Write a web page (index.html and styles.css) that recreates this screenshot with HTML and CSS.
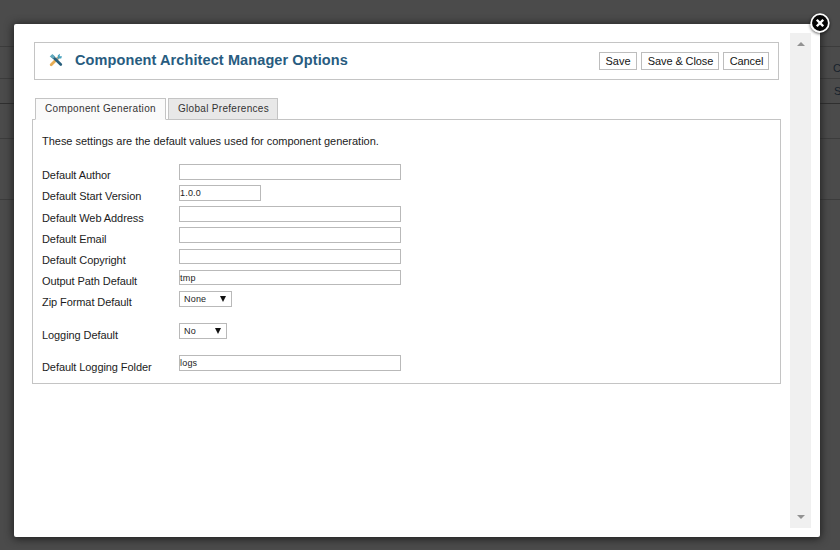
FILE: index.html
```html
<!DOCTYPE html>
<html lang="en">
<head>
<meta charset="utf-8">
<title>Component Architect Manager Options</title>
<link rel="stylesheet" href="styles.css">
</head>
<body>
<div class="backdrop">
  <div class="band band-top"></div>
  <div class="band band-menu"><span>C</span></div>
  <div class="band band-sub"><span>S</span></div>
  <div class="band band-title"></div>
  <div class="band band-body"></div>
</div>
<section class="modal">
  <button class="close" aria-label="Close">
    <svg viewBox="0 0 20 20" width="20" height="20"><circle cx="10" cy="10" r="8.8" fill="#050505" stroke="#fff" stroke-width="1.7"/><path d="M7.6 7.6l4.8 4.8M12.4 7.6l-4.8 4.8" stroke="#fff" stroke-width="2.3" stroke-linecap="square"/></svg>
  </button>
  <main class="content">
    <header class="toolbar">
      <svg class="tools" viewBox="0 0 14 14" width="14" height="14">
        <path d="M9 5L2.2 11.8" stroke="#e7ad55" stroke-width="2.8" stroke-linecap="round"/>
        <path d="M6.5 7.5L9.5 4.5" stroke="#8ba3a5" stroke-width="2"/>
        <path d="M9 5.5L8.8 2.2 11 .8 10.6 3.2 13 3.3 12.2 5.5z" fill="#47a1bd"/>
        <path d="M3.5 3.5L11.8 11.5" stroke="#285f7c" stroke-width="2.7" stroke-linecap="round"/>
        <path d="M.7 3.6L3.4.9 6.3 3.8 4 5.8z" fill="#63a9bd"/>
      </svg>
      <h1>Component Architect Manager Options</h1>
      <div class="actions"><button class="save">Save</button><button class="save-close">Save &amp; Close</button><button class="cancel">Cancel</button></div>
    </header>
    <nav class="tabs"><a class="tab active">Component Generation</a><a class="tab">Global Preferences</a></nav>
    <div class="panel">
      <p class="intro">These settings are the default values used for component generation.</p>
      <form class="fields">
        <label>Default Author</label><div class="input"></div>
        <label>Default Start Version</label><div class="input short">1.0.0</div>
        <label class="low">Default Web Address</label><div class="input"></div>
        <label class="low">Default Email</label><div class="input"></div>
        <label>Default Copyright</label><div class="input slim"></div>
        <label>Output Path Default</label><div class="input slim">tmp</div>
        <label>Zip Format Default</label><div class="select">None<i class="arrow"></i></div>
        <label class="low">Logging Default</label><div class="select narrow">No<i class="arrow"></i></div>
        <label class="low">Default Logging Folder</label><div class="input">logs</div>
      </form>
    </div>
  </main>
  <aside class="scrollbar"><i class="up"></i><i class="down"></i></aside>
</section>
</body>
</html>
```
FILE: styles.css
```css
* { box-sizing: border-box; }
body { margin: 0; height: 550px; overflow: hidden; position: relative; background: #4b4b4b; font-family: "Liberation Sans", Arial, sans-serif; font-size: 11px; color: #1c1c1c; }
button { font: inherit; margin: 0; padding: 0; }
.backdrop { height: 550px; display: flex; flex-direction: column; }
.band { border-bottom: 1px solid #3c3c3c; text-align: right; color: #17222c; overflow: hidden; }
.band span { display: block; width: 7px; margin-left: auto; text-align: left; }
.band-top { height: 47px; }
.band-menu { height: 32px; padding-top: 15px; }
.band-sub { height: 25px; padding-top: 6px; border-color: #2f2f2f; }
.band-sub span { width: 6px; }
.band-title { height: 35px; }
.band-body { height: 61px; }
.modal { position: absolute; left: 14px; top: 24px; width: 806px; height: 513px; background: #fff; border-radius: 2px; box-shadow: 0 1px 8px 1px #202020; display: flex; justify-content: space-between; padding: 9px 9px 9px 18px; }
.close { position: absolute; right: -10px; top: -11px; width: 20px; height: 20px; border: 0; border-radius: 50%; background: none; box-shadow: 0 1px 3px #0009; }
.close svg { display: block; }
.content { width: 749px; padding-top: 9px; }
.toolbar { width: 745px; height: 38px; margin-left: 2px; border: 1px solid #c4c4c4; display: flex; align-items: center; padding: 0 9px 0 14px; }
.tools { margin-top: -3px; }
h1 { margin: -2px 0 0 12px; font-size: 14.5px; line-height: 18px; letter-spacing: .1px; color: #285c80; white-space: nowrap; }
.actions { display: flex; gap: 4px; margin-left: auto; }
.actions button { height: 18px; border: 1px solid #bdbdbd; background: #fff; color: #151515; line-height: 16px; white-space: nowrap; }
.actions .save { width: 38px; }
.actions .save-close { width: 78px; letter-spacing: -.1px; padding-left: 1px; }
.actions .cancel { width: 46px; letter-spacing: -.1px; padding-left: 1px; }
.tabs { display: flex; gap: 2px; height: 22px; margin: 18px 0 -1px 3px; position: relative; }
.tab { width: 110px; height: 22px; border: 1px solid #c4c4c4; background: #e8e8e8; color: #333; padding-left: 9px; font-size: 10px; line-height: 20px; letter-spacing: .3px; white-space: nowrap; }
.tab.active { width: 131px; background: #fafafa; border-bottom-color: #fafafa; letter-spacing: .35px; }
.panel { height: 265px; border: 1px solid #c4c4c4; padding: 14px 9px 0; }
.intro { margin: 0; line-height: 15px; letter-spacing: -.02px; white-space: nowrap; }
.fields { display: grid; margin-top: 15px; grid-template-columns: 137px 222px; grid-template-rows: 21px 21px 21px 22px 21px 21px 32px 32px 21px; align-items: start; }
label { line-height: 23px; letter-spacing: -.08px; white-space: nowrap; }
.low { padding-top: 1px; height: 21px; }
.input, .select { height: 16px; border: 1px solid #b9b9b9; font-size: 9px; line-height: 14px; letter-spacing: .2px; }
.input.slim { height: 15px; }
.input.short { width: 82px; }
.select { width: 53px; padding: 0 5px 0 4px; display: flex; justify-content: space-between; align-items: center; }
.select.narrow { width: 48px; }
.arrow { border: 3.5px solid transparent; border-top: 6px solid #111; border-bottom: 0; }
.scrollbar { width: 21px; background: #f0f0f0; display: flex; flex-direction: column; justify-content: space-between; align-items: center; padding: 9px 0; }
.up, .down { border: 4px solid transparent; }
.up { border-top: 0; border-bottom-color: #929292; }
.down { border-bottom: 0; border-top-color: #929292; }
```
